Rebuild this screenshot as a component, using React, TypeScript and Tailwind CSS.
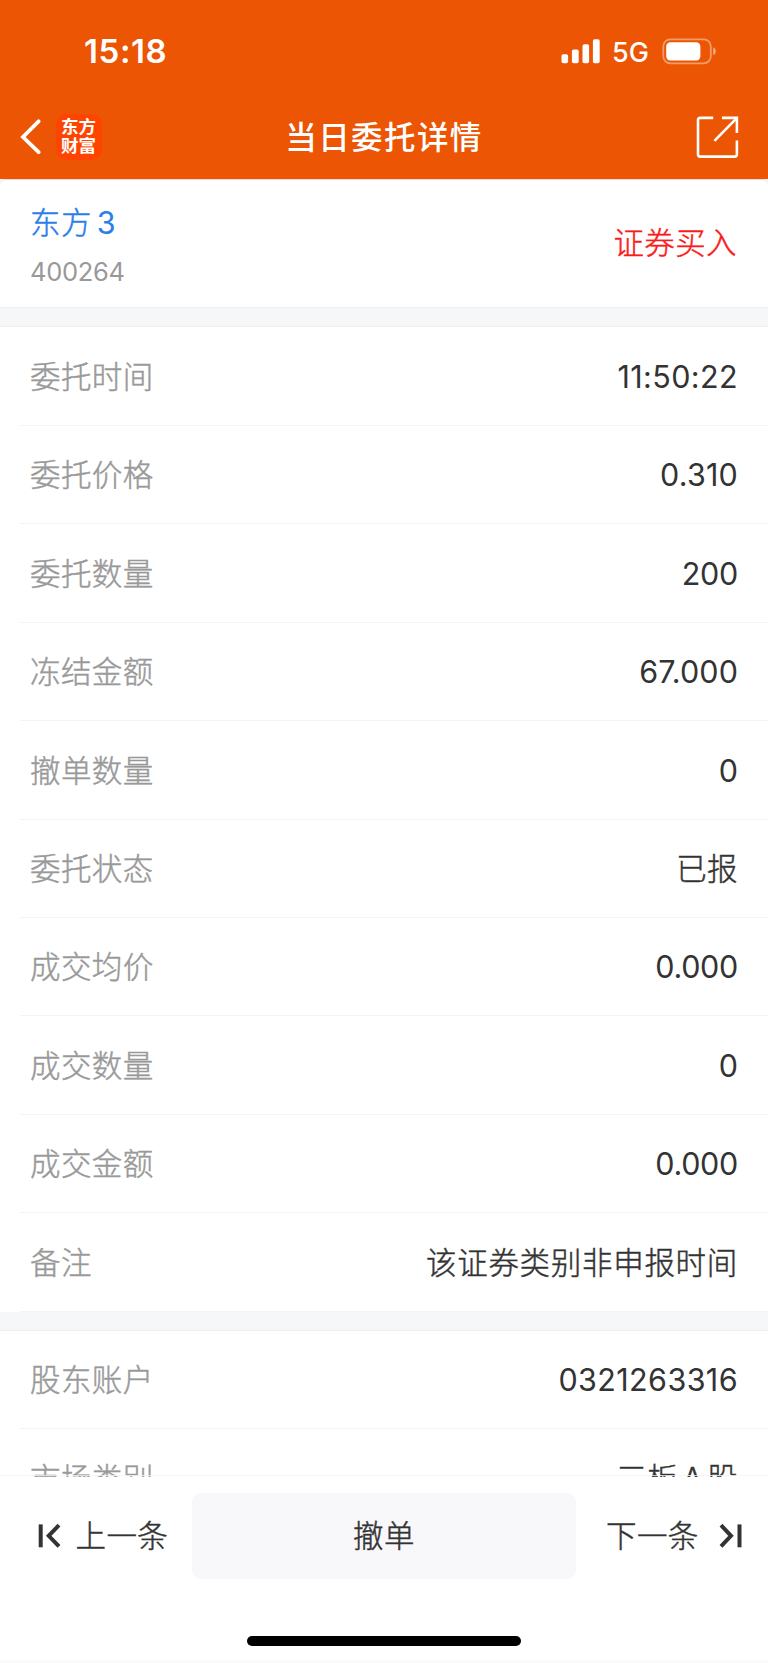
import React from "react";

type Item = { label: string; value: React.ReactNode; tracking?: string };

const thin = "font-light [-webkit-text-stroke:0.45px_currentColor]";

const orderRows: Item[] = [
  { label: "委托时间", value: "11:50:22", tracking: "tracking-[0.4px]" },
  { label: "委托价格", value: "0.310", tracking: "tracking-[0.2px]" },
  { label: "委托数量", value: "200", tracking: "tracking-[-0.3px]" },
  { label: "冻结金额", value: "67.000", tracking: "tracking-[0.1px]" },
  { label: "撤单数量", value: "0", tracking: "tracking-[0px]" },
  { label: "委托状态", value: <span className={thin}>已报</span> },
  { label: "成交均价", value: "0.000", tracking: "tracking-[-0.3px]" },
  { label: "成交数量", value: "0", tracking: "tracking-[0px]" },
  { label: "成交金额", value: "0.000", tracking: "tracking-[-0.3px]" },
  { label: "备注", value: <span className={thin}>该证券类别非申报时间</span>, tracking: "tracking-[0.7px]" },
];

const accountRows: Item[] = [
  { label: "股东账户", value: "0321263316" },
  {
    label: "市场类别",
    value: (
      <span className={thin}>
        三板<span className="mx-[4px]">A</span>股
      </span>
    ),
  },
];

function StatusBar() {
  return (
    <div className="flex h-[102px] items-center justify-between pr-[51px] pl-[84px] text-white">
      <span className="text-[33px] leading-none font-semibold tracking-[0.6px]">15:18</span>
      <div className="flex items-center">
        <svg width="39" height="25" viewBox="0 0 39 25" fill="currentColor">
          <rect x="0.5" y="15.3" width="6.6" height="8.9" rx="1.8" />
          <rect x="10.9" y="10.5" width="6.8" height="13.7" rx="1.8" />
          <rect x="21.5" y="5.3" width="6.6" height="18.9" rx="1.8" />
          <rect x="31.9" y="0.3" width="6.8" height="23.9" rx="1.8" />
        </svg>
        <span className="ml-[12px] w-[38px] pt-[2px] text-[27px] leading-none font-medium">5G</span>
        <svg className="ml-[12px]" width="55" height="27" viewBox="0 0 55 27" fill="none">
          <rect x="1.3" y="1.3" width="47.5" height="24" rx="7" stroke="white" strokeOpacity="0.42" strokeWidth="1.8" />
          <rect x="4.2" y="4.2" width="34.2" height="18.2" rx="4.2" fill="white" />
          <path d="M51.2 9.3C54.6 10.6 54.6 16 51.2 17.3Z" fill="white" fillOpacity="0.5" />
        </svg>
      </div>
    </div>
  );
}

function NavBar() {
  return (
    <div className="grid h-[77px] grid-cols-[1fr_auto_1fr] items-center text-white">
      <div className="flex items-center pb-[8px] pl-[20px]">
        <svg width="22" height="36" viewBox="0 0 22 36" fill="none" stroke="white" strokeWidth="3.8" strokeLinecap="round">
          <path d="M18.6 2.3L3 18L18.6 33.2" />
        </svg>
        <div className="ml-[13.5px] flex h-[46px] w-[46px] flex-col items-center justify-center rounded-[10px] bg-[#ff4400] pb-[1px] text-[17.5px] leading-[19.5px] font-bold">
          <span>东方</span>
          <span>财富</span>
        </div>
      </div>
      <h1 className="pb-[6px] text-[31.5px] leading-[40px] font-medium tracking-[1.4px]">当日委托详情</h1>
      <div className="flex justify-end pr-[29px] pb-[6px]">
        <svg width="43" height="43" viewBox="0 0 43 43" fill="none" stroke="white" strokeWidth="2.6">
          <path d="M17.2 1.9H4.2Q2 1.9 2 4.1V38.3Q2 40.6 4.2 40.6H38.6Q40.9 40.6 40.9 38.3V24.6" />
          <path d="M26 1.9H40.9V17" />
          <path d="M18.4 24.8L40.5 2.3" />
        </svg>
      </div>
    </div>
  );
}

function Row({ label, value, tracking = "tracking-[0.4px]" }: Item) {
  return (
    <div className="h-[98.4px] shrink-0 pl-[20px]">
      <div className="flex h-full items-center justify-between border-b border-[#f3f3f4] pt-[2px] pr-[30px] pl-[10px] text-[30.5px] leading-none">
        <span className={`tracking-[0.4px] text-[#999999] ${thin}`}>{label}</span>
        <span className={`text-[#333333] ${tracking}`}>{value}</span>
      </div>
    </div>
  );
}

export default function App() {
  return (
    <div className="flex h-[1663px] w-[768px] flex-col overflow-hidden bg-white font-[Inter,'Noto_Sans_CJK_SC',sans-serif]">
      <header className="h-[179px] shrink-0 bg-[#eb5503]">
        <StatusBar />
        <NavBar />
      </header>
      <main className="flex h-[1298px] shrink-0 flex-col overflow-hidden bg-[#f6f7f9]">
        <section className="flex h-[128px] shrink-0 items-center justify-between rounded-t-[6px] border-t border-[#fbd9c6] bg-white pr-[31px] pl-[30px]">
          <div className="flex flex-col pt-[6px]">
            <span className="text-[30.5px] leading-[44px] tracking-[0.4px] text-[#2b7ee9]">
              <span className={thin}>东方</span>
              <span className="ml-[5px]">3</span>
            </span>
            <span className="mt-[7px] text-[25.5px] leading-[40px] tracking-[-0.3px] text-[#999999]">400264</span>
          </div>
          <span className={`text-[30.5px] leading-none tracking-[0.4px] text-[#f91c1c] ${thin}`}>证券买入</span>
        </section>
        <div className="h-[20px] shrink-0 border-y border-[#f0f0f2]" />
        <section className="flex shrink-0 flex-col bg-white pt-[0.6px]">
          {orderRows.map((r) => (
            <Row key={r.label} {...r} />
          ))}
        </section>
        <div className="h-[19.4px] shrink-0 border-b border-[#eeeeef]" />
        <section className="flex shrink-0 flex-col bg-white">
          {accountRows.map((r) => (
            <Row key={r.label} {...r} />
          ))}
        </section>
      </main>
      <footer className="relative flex h-[186px] shrink-0 flex-col items-center bg-white">
        <div className="absolute -top-[2px] left-0 h-px w-full bg-[#f3f3f4]/80" />
        <div className="mt-[16px] flex h-[86px] w-full items-center text-[30.5px] leading-none tracking-[0.4px] text-[#333333]">
          <button className="flex h-full w-[192px] shrink-0 items-center pl-[37.5px]">
            <svg width="24" height="26" viewBox="0 0 24 26" fill="none" stroke="currentColor" strokeWidth="4">
              <path d="M2.7 1.4V24.3" />
              <path d="M21 2.2L10.7 12.8L21 23.4" />
            </svg>
            <span className={`ml-[14px] pt-[1px] ${thin}`}>上一条</span>
          </button>
          <button className={`h-full w-[384px] shrink-0 rounded-[8px] bg-[#f8f8fb] pt-[1px] ${thin}`}>撤单</button>
          <button className="flex h-full w-[192px] shrink-0 items-center pl-[30px]">
            <span className={`pt-[1px] ${thin}`}>下一条</span>
            <svg className="ml-[20px]" width="24" height="26" viewBox="0 0 24 26" fill="none" stroke="currentColor" strokeWidth="4">
              <path d="M2 2.2L12 12.8L2 23.4" />
              <path d="M20.5 1.4V24.3" />
            </svg>
          </button>
        </div>
        <div className="mt-[57px] h-[10px] w-[274px] rounded-full bg-black" />
        <div className="mt-auto h-[3px] w-full shrink-0 bg-[#fafafa]" />
      </footer>
    </div>
  );
}
